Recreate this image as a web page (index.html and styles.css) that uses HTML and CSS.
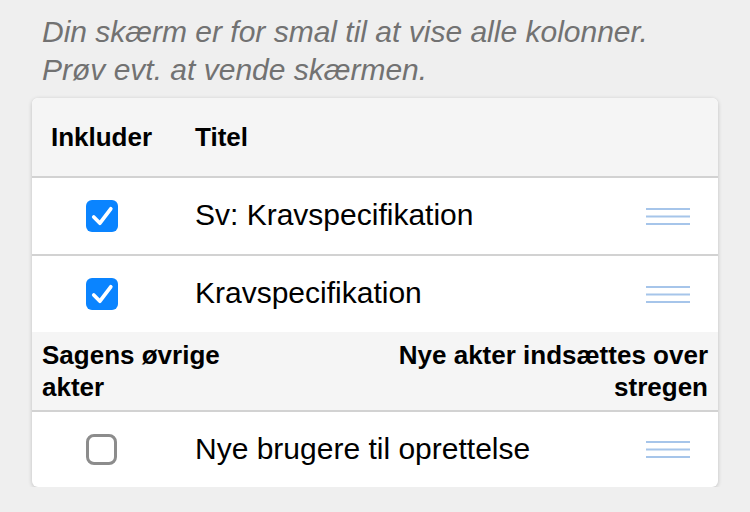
FILE: index.html
```html
<!DOCTYPE html>
<html lang="da">
<head>
  <meta charset="UTF-8">
  <meta name="viewport" content="width=device-width, initial-scale=1.0">
  <title>Akter</title>
  <link rel="stylesheet" href="styles.css">
</head>
<body>

  <p class="notice">Din skærm er for smal til at vise alle kolonner. Prøv evt. at vende skærmen.</p>

  <div class="doc-list">
    <div class="list-head">
      <div class="col-include">Inkluder</div>
      <div class="col-title">Titel</div>
    </div>

    <div class="doc-row bordered">
      <div class="col-include">
        <span class="check checked">
          <svg width="31" height="31" viewBox="0 0 31 31"><path d="M7.5 16.5 L13.5 22.5 L24 8.5" fill="none" stroke="#fff" stroke-width="3.6" stroke-linecap="round" stroke-linejoin="round"/></svg>
        </span>
      </div>
      <div class="col-title">Sv: Kravspecifikation</div>
      <div class="handle">
        <svg width="44" height="18" viewBox="0 0 44 18"><path d="M0 2h44M0 9.5h44M0 17h44" stroke="#a6c5ea" stroke-width="2.2"/></svg>
      </div>
    </div>

    <div class="doc-row">
      <div class="col-include">
        <span class="check checked">
          <svg width="31" height="31" viewBox="0 0 31 31"><path d="M7.5 16.5 L13.5 22.5 L24 8.5" fill="none" stroke="#fff" stroke-width="3.6" stroke-linecap="round" stroke-linejoin="round"/></svg>
        </span>
      </div>
      <div class="col-title">Kravspecifikation</div>
      <div class="handle">
        <svg width="44" height="18" viewBox="0 0 44 18"><path d="M0 2h44M0 9.5h44M0 17h44" stroke="#a6c5ea" stroke-width="2.2"/></svg>
      </div>
    </div>

    <div class="section-head">
      <div class="section-left">Sagens øvrige akter</div>
      <div class="section-right">Nye akter indsættes over stregen</div>
    </div>

    <div class="doc-row last">
      <div class="col-include">
        <span class="check"></span>
      </div>
      <div class="col-title">Nye brugere til oprettelse</div>
      <div class="handle">
        <svg width="44" height="18" viewBox="0 0 44 18"><path d="M0 2h44M0 9.5h44M0 17h44" stroke="#a6c5ea" stroke-width="2.2"/></svg>
      </div>
    </div>
  </div>

</body>
</html>
```

FILE: styles.css
```css
body {
  margin: 0;
  padding: 13px 32px 0;
  background: #efefef;
  font-family: 'Liberation Sans', Arial, sans-serif;
  color: #000;
}

.notice {
  margin: 0 0 10px;
  padding: 0 10px;
  font-size: 30px;
  font-style: italic;
  line-height: 37.5px;
  color: #727272;
}

.doc-list {
  background: #fff;
  border-radius: 6px;
  overflow: hidden;
  box-shadow: 0 1px 4px rgba(0, 0, 0, 0.2);
}

.list-head {
  display: flex;
  align-items: center;
  padding: 23px 0;
  background: #f5f5f5;
  border-bottom: 2px solid #d2d2d2;
  font-size: 26px;
  font-weight: bold;
  line-height: 32px;
}

.col-include {
  width: 139px;
  flex-shrink: 0;
  display: flex;
  justify-content: center;
}

.col-title {
  flex: 1;
  padding-left: 24px;
}

.doc-row {
  display: flex;
  align-items: center;
  height: 76px;
  font-size: 30px;
}

.doc-row .col-title {
  margin-top: -2px;
}

.doc-row.bordered {
  border-bottom: 2px solid #d2d2d2;
}

.doc-row.last {
  height: 75px;
}

.handle {
  width: 44px;
  height: 18px;
  margin-right: 28px;
  margin-top: -1px;
}

.handle svg {
  display: block;
}

.check {
  display: block;
  width: 31px;
  height: 31px;
  box-sizing: border-box;
  border: 3px solid #8c8c8c;
  border-radius: 8px;
}

.check.checked {
  width: 32px;
  height: 32px;
  border: none;
  border-radius: 6px;
  background: #0a84ff;
}

.check svg {
  display: block;
  width: 32px;
  height: 32px;
}

.section-head {
  display: flex;
  justify-content: space-between;
  padding: 7px 10px;
  background: #f5f5f5;
  border-bottom: 2px solid #d2d2d2;
  font-size: 26px;
  font-weight: bold;
  line-height: 32px;
}

.section-left {
  width: 210px;
}

.section-right {
  width: 340px;
  text-align: right;
}
```
